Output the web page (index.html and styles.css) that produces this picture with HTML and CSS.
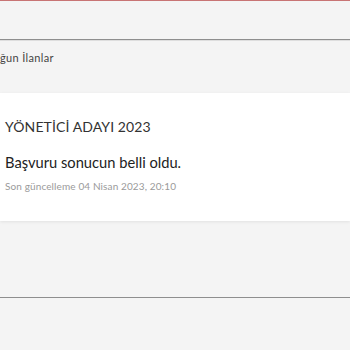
FILE: index.html
```html
<!DOCTYPE html>
<html lang="tr">
<head>
<meta charset="utf-8">
<link rel="stylesheet" href="styles.css">
</head>
<body>
<div class="topbar"></div>
<div class="section-title">ğun İlanlar</div>
<div class="card">
  <div class="card-title">YÖNETİCİ ADAYI 2023</div>
  <div class="card-sub">Başvuru sonucun belli oldu.</div>
  <div class="card-meta">Son güncelleme 04 Nisan 2023, 20:10</div>
</div>
<div class="bottom-area"></div>
</body>
</html>
```
FILE: styles.css
```css
html, body {
  margin: 0;
  padding: 0;
  background: #f4f4f4;
  font-family: Lato, "Open Sans", sans-serif;
  color: #333;
}
.topbar {
  height: 38px;
  border-top: 1px solid #c87474;
  border-bottom: 1px solid #8e8e8e;
  box-shadow: 0 1px 0 #dedede;
}
.section-title {
  height: 53px;
  box-sizing: border-box;
  padding-top: 11px;
  font-size: 11px;
  line-height: 14px;
  letter-spacing: 0.35px;
  color: #444;
}
.card {
  background: #fff;
  height: 128px;
  box-sizing: border-box;
  padding: 25px 5px 0 5px;
  box-shadow: 0 1px 3px rgba(0,0,0,0.08);
}
.card-title {
  font-size: 14px;
  line-height: 18px;
  letter-spacing: 0.1px;
  color: #333;
}
.card-sub {
  margin-top: 16px;
  font-size: 14.7px;
  line-height: 20px;
  color: #222;
  font-weight: 400;
}
.card-meta {
  margin-top: 8px;
  font-size: 10px;
  line-height: 13px;
  letter-spacing: 0.12px;
  color: #9a9a9a;
}
.bottom-area {
  height: 76px;
  border-bottom: 1px solid #8e8e8e;
  box-shadow: 0 1px 0 #dedede;
}
```
